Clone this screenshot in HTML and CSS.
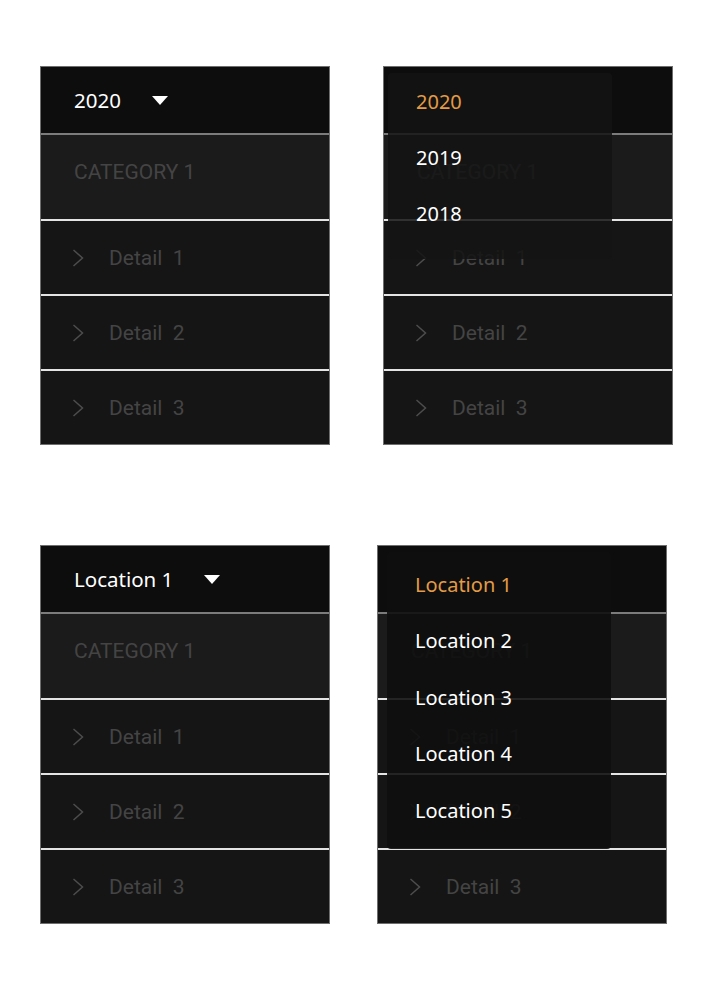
FILE: index.html
```html
<!DOCTYPE html>
<html lang="en">
<head>
<meta charset="utf-8">
<title>Dropdown states</title>
<link rel="stylesheet" href="styles.css">
</head>
<body>
<main class="board">
  <div class="row row-top">
    <section class="panel">
      <div class="panel-head">
        <span class="head-label">2020</span>
        <svg class="caret" width="16" height="9" viewBox="0 0 16 9"><polygon points="0,0 16,0 8,9" fill="#fff"/></svg>
      </div>
      <div class="category">CATEGORY 1</div>
      <ul class="details">
        <li class="detail"><svg class="chev" width="12" height="18" viewBox="0 0 12 18"><polyline points="1.5,1 10.5,9 1.5,17" fill="none" stroke="#4d4d4d" stroke-width="1.5"/></svg><span class="detail-label">Detail&nbsp; 1</span></li>
        <li class="detail"><svg class="chev" width="12" height="18" viewBox="0 0 12 18"><polyline points="1.5,1 10.5,9 1.5,17" fill="none" stroke="#4d4d4d" stroke-width="1.5"/></svg><span class="detail-label">Detail&nbsp; 2</span></li>
        <li class="detail"><svg class="chev" width="12" height="18" viewBox="0 0 12 18"><polyline points="1.5,1 10.5,9 1.5,17" fill="none" stroke="#4d4d4d" stroke-width="1.5"/></svg><span class="detail-label">Detail&nbsp; 3</span></li>
      </ul>
    </section>

    <section class="panel">
      <div class="panel-head"></div>
      <div class="category">CATEGORY 1</div>
      <ul class="details">
        <li class="detail"><svg class="chev" width="12" height="18" viewBox="0 0 12 18"><polyline points="1.5,1 10.5,9 1.5,17" fill="none" stroke="#4d4d4d" stroke-width="1.5"/></svg><span class="detail-label">Detail&nbsp; 1</span></li>
        <li class="detail"><svg class="chev" width="12" height="18" viewBox="0 0 12 18"><polyline points="1.5,1 10.5,9 1.5,17" fill="none" stroke="#4d4d4d" stroke-width="1.5"/></svg><span class="detail-label">Detail&nbsp; 2</span></li>
        <li class="detail"><svg class="chev" width="12" height="18" viewBox="0 0 12 18"><polyline points="1.5,1 10.5,9 1.5,17" fill="none" stroke="#4d4d4d" stroke-width="1.5"/></svg><span class="detail-label">Detail&nbsp; 3</span></li>
      </ul>
      <ul class="menu menu-year">
        <li class="menu-item is-selected">2020</li>
        <li class="menu-item">2019</li>
        <li class="menu-item">2018</li>
      </ul>
    </section>
  </div>

  <div class="row row-bottom">
    <section class="panel">
      <div class="panel-head">
        <span class="head-label">Location 1</span>
        <svg class="caret" width="16" height="9" viewBox="0 0 16 9"><polygon points="0,0 16,0 8,9" fill="#fff"/></svg>
      </div>
      <div class="category">CATEGORY 1</div>
      <ul class="details">
        <li class="detail"><svg class="chev" width="12" height="18" viewBox="0 0 12 18"><polyline points="1.5,1 10.5,9 1.5,17" fill="none" stroke="#4d4d4d" stroke-width="1.5"/></svg><span class="detail-label">Detail&nbsp; 1</span></li>
        <li class="detail"><svg class="chev" width="12" height="18" viewBox="0 0 12 18"><polyline points="1.5,1 10.5,9 1.5,17" fill="none" stroke="#4d4d4d" stroke-width="1.5"/></svg><span class="detail-label">Detail&nbsp; 2</span></li>
        <li class="detail"><svg class="chev" width="12" height="18" viewBox="0 0 12 18"><polyline points="1.5,1 10.5,9 1.5,17" fill="none" stroke="#4d4d4d" stroke-width="1.5"/></svg><span class="detail-label">Detail&nbsp; 3</span></li>
      </ul>
    </section>

    <section class="panel">
      <div class="panel-head"></div>
      <div class="category">CATEGORY 1</div>
      <ul class="details">
        <li class="detail"><svg class="chev" width="12" height="18" viewBox="0 0 12 18"><polyline points="1.5,1 10.5,9 1.5,17" fill="none" stroke="#4d4d4d" stroke-width="1.5"/></svg><span class="detail-label">Detail&nbsp; 1</span></li>
        <li class="detail"><svg class="chev" width="12" height="18" viewBox="0 0 12 18"><polyline points="1.5,1 10.5,9 1.5,17" fill="none" stroke="#4d4d4d" stroke-width="1.5"/></svg><span class="detail-label">Detail&nbsp; 2</span></li>
        <li class="detail"><svg class="chev" width="12" height="18" viewBox="0 0 12 18"><polyline points="1.5,1 10.5,9 1.5,17" fill="none" stroke="#4d4d4d" stroke-width="1.5"/></svg><span class="detail-label">Detail&nbsp; 3</span></li>
      </ul>
      <ul class="menu menu-location">
        <li class="menu-item is-selected">Location 1</li>
        <li class="menu-item">Location 2</li>
        <li class="menu-item">Location 3</li>
        <li class="menu-item">Location 4</li>
        <li class="menu-item">Location 5</li>
      </ul>
    </section>
  </div>
</main>
</body>
</html>
```

FILE: styles.css
```css
* { box-sizing: border-box; }

html, body {
  margin: 0;
  padding: 0;
  background: #ffffff;
}

body {
  font-family: "Noto Sans", Roboto, "Liberation Sans", sans-serif;
}

.board {
  display: flex;
  flex-direction: column;
  gap: 100px;
  padding: 66px 0 0 40px;
}

.row {
  display: flex;
  align-items: flex-start;
}

.row-top { gap: 53px; }
.row-bottom { gap: 47px; }

.panel {
  position: relative;
  width: 290px;
  border: 1px solid #6e6e6e;
  background: #151515;
}

.panel-head {
  height: 68px;
  display: flex;
  align-items: center;
  padding-left: 33px;
  background: #0d0d0d;
  border-bottom: 2px solid #7c7c7c;
  color: #ffffff;
  font-size: 20.5px;
}

.head-label {
  line-height: 24px;
}

.caret {
  display: block;
  margin-left: 31px;
  margin-top: 1px;
}

.category {
  height: 86px;
  padding: 25px 0 0 33px;
  background: #1b1b1b;
  border-bottom: 2px solid #e4e4e4;
  font-family: Roboto, "Liberation Sans", sans-serif;
  font-size: 21px;
  line-height: 24px;
  color: #444444;
}

.details {
  list-style: none;
  margin: 0;
  padding: 0;
}

.detail {
  height: 75px;
  display: flex;
  align-items: center;
  padding-left: 31px;
  background: #151515;
  border-bottom: 2px solid #e4e4e4;
}

.detail:last-child {
  height: 73px;
  border-bottom: 0;
}

.chev {
  display: block;
  flex: none;
}

.detail-label {
  margin-left: 25px;
  font-family: Roboto, "Liberation Sans", sans-serif;
  font-size: 21px;
  line-height: 24px;
  color: #444444;
}

.menu {
  position: absolute;
  list-style: none;
  margin: 0;
  width: 224px;
  border-radius: 4px;
}

.menu-year {
  top: 6px;
  left: 4px;
  padding: 0 0 18px 0;
  background: rgba(20, 20, 20, 0.86);
}

.menu-location {
  top: 6px;
  left: 9px;
  padding: 4px 0 10px 0;
  background: rgba(14, 14, 14, 0.9);
}

.menu-item {
  height: 56px;
  display: flex;
  align-items: center;
  padding-left: 28px;
  font-size: 20px;
  color: #ffffff;
}

.menu-location .menu-item {
  height: 56.5px;
}

.menu-item.is-selected {
  color: #e49b45;
}
```
